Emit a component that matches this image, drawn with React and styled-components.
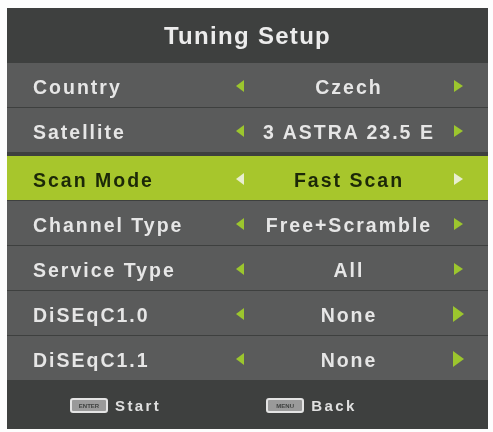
import styled, { createGlobalStyle } from "styled-components";

const Global = createGlobalStyle`
  body {
    margin: 0;
    background: #fdfdfd;
    font-family: "Liberation Sans", Arial, sans-serif;
  }
`;

const Page = styled.div`
  padding: 8px 5px 4px 7px;
`;

const Panel = styled.div`
  width: 481px;
  background: #3e403f;
  display: flex;
  flex-direction: column;
  filter: blur(0.6px);
`;

const Header = styled.div`
  height: 55px;
  display: flex;
  align-items: center;
  justify-content: center;
  color: #ececec;
  font-size: 24px;
  font-weight: bold;
  letter-spacing: 1.3px;
`;

const Row = styled.div`
  height: 44px;
  box-sizing: border-box;
  padding: 4px 18px 0 26px;
  display: grid;
  grid-template-columns: 195px 24px 1fr 24px;
  align-items: center;
  margin-bottom: 1px;
  background: ${(p) => (p.active ? "#a7c62c" : "#5a5b5b")};
  color: ${(p) => (p.active ? "#1c2808" : "#e6e6e6")};
  font-size: 19.5px;
  font-weight: bold;
  letter-spacing: 2px;
  ${(p) => p.active && "margin-top: 3px;"}
`;

const Value = styled.span`
  text-align: center;
  white-space: nowrap;
`;

const Arrow = styled.span`
  justify-self: center;
  width: 0;
  height: 0;
  margin-top: -3px;
  border-top: ${(p) => p.size / 2}px solid transparent;
  border-bottom: ${(p) => p.size / 2}px solid transparent;
  ${(p) =>
    p.dir === "left"
      ? `border-right: ${p.size * 0.7}px solid ${p.color};`
      : `border-left: ${p.size * 0.7}px solid ${p.color};`}
`;

const Footer = styled.div`
  height: 47px;
  margin-top: 1px;
  display: flex;
  align-items: center;
  padding-left: 63px;
  gap: 105px;
  color: #e0e0e0;
  font-size: 15px;
  font-weight: bold;
  letter-spacing: 2.4px;
`;

const Hint = styled.div`
  display: flex;
  align-items: center;
  gap: 7px;
`;

const Key = styled.span`
  width: 34px;
  height: 11px;
  border: 2px solid #e4e4e4;
  border-radius: 3px;
  background: #9a9a9a;
  color: #3e403f;
  font-size: 6px;
  letter-spacing: 0;
  display: flex;
  align-items: center;
  justify-content: center;
`;

const rows = [
  { label: "Country", value: "Czech" },
  { label: "Satellite", value: "3 ASTRA 23.5 E" },
  { label: "Scan Mode", value: "Fast Scan", active: true },
  { label: "Channel Type", value: "Free+Scramble" },
  { label: "Service Type", value: "All" },
  { label: "DiSEqC1.0", value: "None", big: true },
  { label: "DiSEqC1.1", value: "None", big: true },
];

export default function App() {
  return (
    <Page>
      <Global />
      <Panel>
        <Header>Tuning Setup</Header>
        {rows.map((r) => {
          const color = r.active ? "#e8eed0" : "#9cc62e";
          return (
            <Row key={r.label} active={r.active}>
              <span>{r.label}</span>
              <Arrow dir="left" size={12} color={color} />
              <Value>{r.value}</Value>
              <Arrow dir="right" size={r.big ? 17 : 13} color={color} />
            </Row>
          );
        })}
        <Footer>
          <Hint>
            <Key>ENTER</Key>
            Start
          </Hint>
          <Hint>
            <Key>MENU</Key>
            Back
          </Hint>
        </Footer>
      </Panel>
    </Page>
  );
}
